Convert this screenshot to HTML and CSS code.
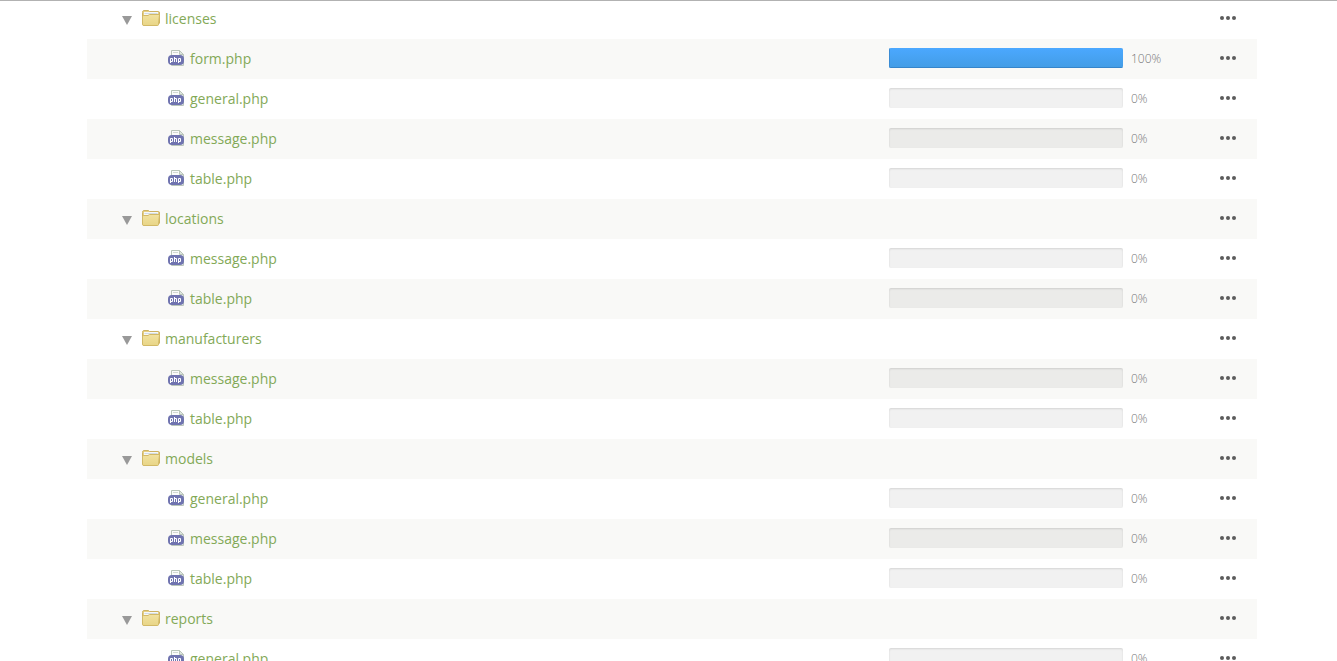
FILE: index.html
```
<!DOCTYPE html>
<html lang="en">
<head>
<meta charset="utf-8">
<title>Translation files</title>
<link rel="stylesheet" href="styles.css">
</head>
<body>
<svg class="defs" aria-hidden="true">
  <defs>
    <linearGradient id="folder-fill" x1="0" y1="0" x2="0" y2="1">
      <stop offset="0" stop-color="#f2e2a0"/>
      <stop offset="1" stop-color="#e8d586"/>
    </linearGradient>
  </defs>
  <symbol id="folder" viewBox="0 0 18 16">
    <path d="M.5 14V2.5Q.5 .5 2 .5H6.500L7.500 1.500H16.500Q17.500 1.500 17.500 3V13L15 15.500H2Z" fill="#e6cf85" stroke="#cdb262"/>
    <path d="M2 2H16V6H2Z" fill="#f6f8f9"/>
    <path d="M2.500 3.500H15.500" stroke="#d3dbe0"/>
    <path d="M.5 7Q.5 5.500 1.500 5.500H6L7.500 4.500H17.500L16.500 14.500Q16.400 15.500 15.500 15.500H2Q.5 15.500 .5 14.500Z" fill="url(#folder-fill)" stroke="#d2b966"/>
  </symbol>
  <symbol id="php" viewBox="0 0 16 16">
    <path d="M3.500 15.500V.5H11.500L15.500 4.500V15.500Z" fill="#fbfcfb" stroke="#bac6ba"/>
    <path d="M11.500 .5V4.500H15.500Z" fill="#dfe6df" stroke="#bac6ba"/>
    <path d="M5 2.500H10" stroke="#d3dad3"/>
    <rect x="0" y="5" width="16" height="10" rx="4" fill="#7074b0"/>
    <path d="M2.500 13V8.500H4.500V11.500H2.500M6.500 7V12M6.500 8.500H8.500V12M10.500 13V8.500H12.500V11.500H10.500" fill="none" stroke="#fff"/>
  </symbol>
  <symbol id="caret" viewBox="0 0 10 9">
    <path d="M0 0H10L5 9Z" fill="#999"/>
  </symbol>
  <symbol id="dots" viewBox="0 0 16 4">
    <circle cx="2" cy="2" r="2"/><circle cx="8" cy="2" r="2"/><circle cx="14" cy="2" r="2"/>
  </symbol>
</svg>
<header class="topline"></header>
<main class="page">
  <table class="files">
    <colgroup><col class="col-name"><col class="col-progress"><col class="col-menu"></colgroup>
    <tbody id="rows"></tbody>
  </table>
</main>
<script src="files.js"></script>
</body>
</html>
```
FILE: styles.css
```
body {
  margin: 0;
  height: 100vh;
  overflow: hidden;
  background: #fff;
  color: #555;
  font: 14px/20px "Open Sans", sans-serif;
}

.defs {
  position: absolute;
  width: 0;
  height: 0;
}

.topline {
  height: 1px;
  background: #b2b2b2;
}

.page {
  margin-top: -2px;
  padding-left: 7px;
}

.files {
  width: 100%;
  max-width: 1170px;
  margin: 0 auto;
  table-layout: fixed;
  border-collapse: collapse;
}

.col-progress {
  width: 320px;
}

.col-menu {
  width: 48px;
}

.row {
  height: 40px;
}

.row:nth-child(even) {
  background: #f9f9f7;
}

.row td {
  padding: 0;
}

.name,
.progress {
  display: flex;
  align-items: center;
}

.folder-name {
  padding-left: 35px;
}

.file-name {
  padding-left: 81px;
}

.toggle,
.menu {
  display: flex;
  border: 0;
  padding: 0;
  background: none;
  cursor: pointer;
}

.toggle {
  padding-top: 2px;
  margin-right: 10px;
}

.caret {
  width: 10px;
  height: 9px;
}

.folder-icon {
  width: 18px;
  height: 16px;
  margin: 0 5px 2px 0;
}

.php-icon {
  width: 16px;
  height: 16px;
  margin: 0 6px 2px 0;
}

.link {
  color: #83a957;
  text-decoration: none;
}

.bar {
  width: 234px;
  height: 20px;
  margin-bottom: 2px;
  border-radius: 2px;
  overflow: hidden;
  background: rgba(0, 0, 0, 0.055);
  box-shadow: inset 0 1px 2px rgba(0, 0, 0, 0.12);
}

.progress {
  gap: 8px;
}

.fill {
  height: 100%;
  box-sizing: border-box;
  background: linear-gradient(#4ba8ff, #439de6);
  border-bottom: 1px solid #3585cb;
  border-left: 1px solid #3b8cd4;
}

.percent {
  color: #777;
  font-size: 12px;
  font-weight: 300;
}

.menu {
  padding: 8px 0 10px 11px;
}

.dots {
  width: 16px;
  height: 4px;
  fill: #5c5c5c;
}
```
FILE: files.js
```
const folders = [
  ["licenses", [["form.php", 100], ["general.php", 0], ["message.php", 0], ["table.php", 0]]],
  ["locations", [["message.php", 0], ["table.php", 0]]],
  ["manufacturers", [["message.php", 0], ["table.php", 0]]],
  ["models", [["general.php", 0], ["message.php", 0], ["table.php", 0]]],
  ["reports", [["general.php", 0]]]
];

const icon = (id, cls) => `<svg class="${cls}" aria-hidden="true"><use href="#${id}"/></svg>`;

const menu = name => `<td><button class="menu" aria-label="Options for ${name}">${icon("dots", "dots")}</button></td>`;

const folderRow = name => `<tr class="row">
  <td><div class="name folder-name">
    <button class="toggle" aria-label="Collapse ${name}">${icon("caret", "caret")}</button>
    ${icon("folder", "folder-icon")}<a class="link" href="#">${name}</a>
  </div></td><td></td>${menu(name)}</tr>`;

const fileRow = ([name, done]) => `<tr class="row">
  <td><div class="name file-name">${icon("php", "php-icon")}<a class="link" href="#">${name}</a></div></td>
  <td><div class="progress">
    <div class="bar" role="progressbar" aria-label="${name}" aria-valuenow="${done}">${done ? `<div class="fill" style="width:${done}%"></div>` : ""}</div>
    <span class="percent">${done}%</span>
  </div></td>${menu(name)}</tr>`;

document.getElementById("rows").innerHTML = folders
  .map(([name, files]) => folderRow(name) + files.map(fileRow).join(""))
  .join("");
```
